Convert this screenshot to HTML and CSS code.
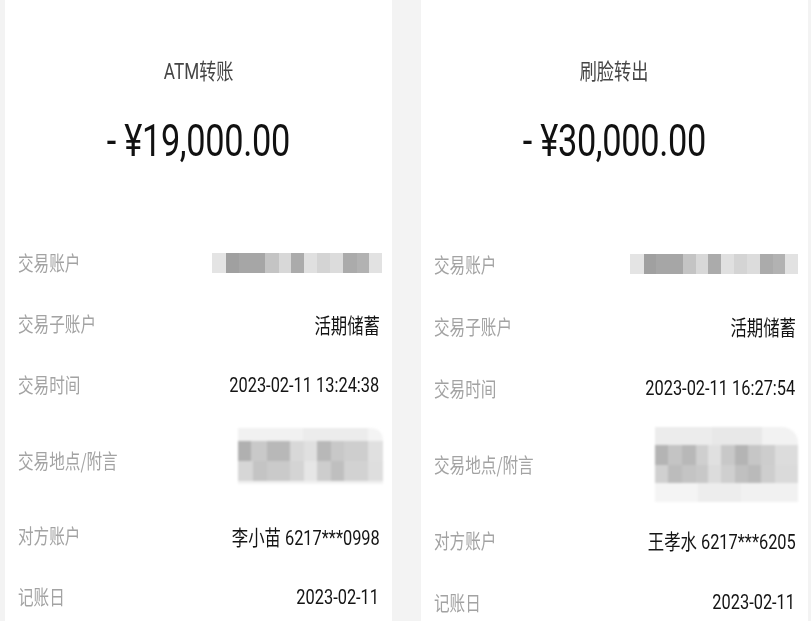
FILE: index.html
```html
<!DOCTYPE html>
<html lang="zh-CN">
<head>
<meta charset="utf-8">
<title>交易详情</title>
<link rel="stylesheet" href="styles.css">
</head>
<body>
<div class="page">
  <section class="card">
    <div class="title"><span class="sq">ATM转账</span></div>
    <div class="amount"><span class="sq">- ¥19,000.00</span></div>
    <div class="rows">
      <div class="row"><span class="label sq">交易账户</span><div class="mask-acct"></div></div>
      <div class="row"><span class="label sq">交易子账户</span><span class="value sq">活期储蓄</span></div>
      <div class="row"><span class="label sq">交易时间</span><span class="value sq">2023-02-11 13:24:38</span></div>
      <div class="row tall"><span class="label sq">交易地点/附言</span>
        <div class="mask-loc mask-loc-a">
          <div class="band band-top"></div>
          <div class="band band-r1a"></div>
          <div class="band band-r2a"></div>
          <div class="band band-bot-a"></div>
        </div>
      </div>
      <div class="row"><span class="label sq">对方账户</span><span class="value sq">李小苗 6217***0998</span></div>
      <div class="row"><span class="label sq">记账日</span><span class="value sq">2023-02-11</span></div>
    </div>
  </section>
  <section class="card card-b">
    <div class="title"><span class="sq">刷脸转出</span></div>
    <div class="amount"><span class="sq">- ¥30,000.00</span></div>
    <div class="rows">
      <div class="row"><span class="label sq">交易账户</span><div class="mask-acct mask-acct-b"></div></div>
      <div class="row"><span class="label sq">交易子账户</span><span class="value sq">活期储蓄</span></div>
      <div class="row"><span class="label sq">交易时间</span><span class="value sq">2023-02-11 16:27:54</span></div>
      <div class="row tall"><span class="label sq">交易地点/附言</span>
        <div class="mask-loc mask-loc-b">
          <div class="band band-top-b"></div>
          <div class="band band-r1b"></div>
          <div class="band band-r2b"></div>
          <div class="band band-bot-b"></div>
        </div>
      </div>
      <div class="row"><span class="label sq">对方账户</span><span class="value sq">王孝水 6217***6205</span></div>
      <div class="row"><span class="label sq">记账日</span><span class="value sq">2023-02-11</span></div>
    </div>
  </section>
</div>
</body>
</html>
```
FILE: styles.css
```css
html, body {
  margin: 0;
  padding: 0;
  height: 100%;
  overflow: hidden;
  background: #f3f3f3;
}

.page {
  width: 811px;
  height: 621px;
  box-sizing: border-box;
  padding: 0 3px 0 5px;
  display: flex;
  gap: 29px;
  overflow: hidden;
  font-family: Roboto, "Noto Sans CJK SC", sans-serif;
}

.card {
  flex: 1;
  min-width: 0;
  background: #ffffff;
  padding: 57px 12.5px 0 12.5px;
}

.sq {
  display: inline-block;
  white-space: nowrap;
  transform: scaleX(0.78);
}

.title {
  text-align: center;
  font-size: 22px;
  line-height: 30px;
  color: #454545;
}

.amount {
  text-align: center;
  margin-top: 29px;
  font-size: 44px;
  line-height: 50px;
  letter-spacing: -0.4px;
  color: #111111;
}

.rows {
  margin-top: 66px;
}

.card-b .rows {
  margin-top: 67px;
}

.row {
  display: flex;
  justify-content: space-between;
  align-items: center;
  height: 61px;
}

.card-b .row {
  height: 62px;
}

.card .row.tall {
  height: 90px;
}

.label {
  font-family: "Noto Sans CJK SC", sans-serif;
  font-size: 20px;
  color: #a3a3a3;
  transform-origin: left center;
}

.value {
  font-size: 21px;
  color: #141414;
  transform-origin: right center;
}

.mask-acct {
  width: 170px;
  height: 20px;
  margin-right: -2.5px;
  filter: blur(0.7px);
  background: linear-gradient(90deg,
    #e4e4e4 0 8.4%,
    #a0a0a0 8.4% 15.7%,
    #a6a6a6 15.7% 31.4%,
    #c4c4c4 31.4% 39.2%,
    #d8d8d8 39.2% 46.5%,
    #ababab 46.5% 54.3%,
    #e0e0e0 54.3% 61.8%,
    #d4d4d4 61.8% 69.6%,
    #dcdcdc 69.6% 77.1%,
    #ababab 77.1% 85.3%,
    #b2b2b2 85.3% 92.2%,
    #e2e2e2 92.2% 100%);
}

.mask-acct-b {
  width: 168px;
}

.mask-loc {
  display: flex;
  flex-direction: column;
  filter: blur(0.8px);
}

.mask-loc-a {
  width: 145px;
  margin-right: -3.5px;
  margin-bottom: 9px;
}

.mask-loc-b {
  width: 143px;
  margin-right: -2.5px;
}

.band-top {
  height: 13px;
  background: linear-gradient(90deg, #f1f1f1 0 45%, #ececec 45% 90%, #f4f4f4 90% 100%);
  border-radius: 0 12px 0 0;
}

.band-bot-a {
  height: 3px;
  background: #f2f2f2;
}

.band-r1a {
  height: 20px;
  background: linear-gradient(90deg,
    #b0b0b0 0 9.3%,
    #c9c9c9 9.3% 19.8%,
    #b8b8b8 19.8% 36%,
    #d8d8d8 36% 45.3%,
    #e0e0e0 45.3% 54.7%,
    #b8b8b8 54.7% 64%,
    #c8c8c8 64% 73.3%,
    #cecece 73.3% 89.5%,
    #e0e0e0 89.5% 100%);
}

.band-r2a {
  height: 20px;
  background: linear-gradient(90deg,
    #d6d6d6 0 10.5%,
    #c4c4c4 10.5% 19.8%,
    #cacaca 19.8% 36%,
    #d4d4d4 36% 45.3%,
    #e6e6e6 45.3% 54.7%,
    #cdcdcd 54.7% 64%,
    #bfbfbf 64% 73.3%,
    #d2d2d2 73.3% 89.5%,
    #dedede 89.5% 100%);
}

.band-top-b {
  height: 18px;
  background: linear-gradient(90deg, #ececec 0 40%, #e8e8e8 40% 75%, #f2f2f2 75% 100%);
  border-radius: 0 16px 0 0;
}

.band-r1b {
  height: 20px;
  background: linear-gradient(90deg,
    #b4b4b4 0 9.3%,
    #c4c4c4 9.3% 18.6%,
    #b8b8b8 18.6% 29%,
    #cfcfcf 29% 37.2%,
    #e0e0e0 37.2% 46.5%,
    #c8c8c8 46.5% 55.8%,
    #b4b4b4 55.8% 65.1%,
    #c6c6c6 65.1% 74.4%,
    #cdcdcd 74.4% 83.7%,
    #dcdcdc 83.7% 100%);
}

.band-r2b {
  height: 18px;
  background: linear-gradient(90deg,
    #d0d0d0 0 9.3%,
    #bcbcbc 9.3% 18.6%,
    #c4c4c4 18.6% 29%,
    #c8c8c8 29% 37.2%,
    #dcdcdc 37.2% 46.5%,
    #cfcfcf 46.5% 55.8%,
    #c0c0c0 55.8% 65.1%,
    #bababa 65.1% 74.4%,
    #cecece 74.4% 83.7%,
    #dadada 83.7% 100%);
}

.band-bot-b {
  height: 19px;
  background: linear-gradient(90deg, #f4f4f4 0 30%, #ededed 30% 60%, #f1f1f1 60% 100%);
}
```
